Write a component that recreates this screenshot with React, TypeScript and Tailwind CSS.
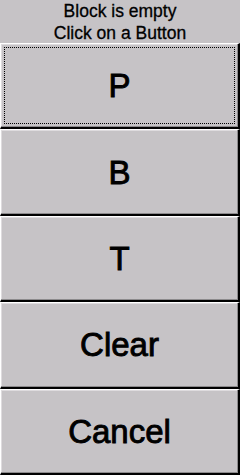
import React from 'react';

const BUTTONS = ['P', 'B', 'T', 'Clear', 'Cancel'];

const App: React.FC = () => {
  return (
    <div className="w-[240px] h-[475px] bg-[#c6c3c6] flex flex-col font-['Liberation_Sans',Arial,sans-serif] text-black overflow-hidden">
      <div className="h-[43px] flex flex-col items-center text-[17.5px] leading-[22px] [-webkit-text-stroke:0.3px_black]">
        <div>Block is empty</div>
        <div>Click on a Button</div>
      </div>
      <div className="flex-1 flex flex-col">
        {BUTTONS.map((label, i) => (
          <button
            key={label}
            className="flex-1 relative flex items-center justify-center bg-[#c6c3c6] border-t border-l border-t-white border-l-white border-b-2 border-r-2 border-b-black border-r-black shadow-[inset_-1px_-1px_#8c8a8c,inset_1px_1px_#dedbde] text-[33px] leading-none [-webkit-text-stroke:0.9px_black]"
          >
            {i === 0 && (
              <span className="absolute inset-x-[3px] top-[3px] bottom-[3px] border border-dotted border-black" />
            )}
            <span>{label}</span>
          </button>
        ))}
      </div>
    </div>
  );
};

export default App;
